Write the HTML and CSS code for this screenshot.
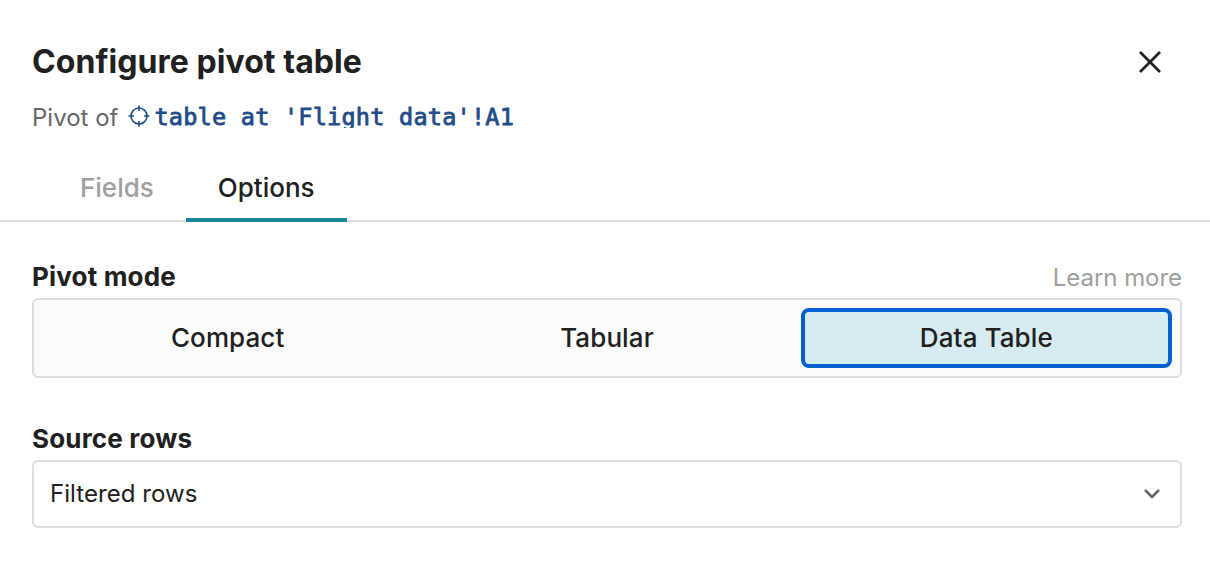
FILE: index.html
```html
<!DOCTYPE html>
<html lang="en">
<head>
  <meta charset="UTF-8" />
  <title>Configure pivot table</title>
  <link rel="stylesheet" href="styles.css">
</head>
<body>
  <header class="header">
    <h1>Configure pivot table</h1>
    <button class="close" title="Close">
      <svg width="24" height="24" viewBox="0 0 24 24"><path d="M2 2L22 22M22 2L2 22"/></svg>
    </button>
  </header>
  <div class="source">
    <span>Pivot of</span>
    <svg width="22" height="22" viewBox="0 0 22 22"><circle cx="11" cy="11" r="8"/><path d="M11 0.5V6M11 16V21.5M0.5 11H6M16 11H21.5"/></svg>
    <span class="ref">table at 'Flight data'!A1</span>
  </div>
  <nav class="tabs">
    <button class="tab">Fields</button>
    <button class="tab active">Options</button>
  </nav>
  <main class="options">
    <div class="label-row">
      <h2>Pivot mode</h2>
      <a class="learn">Learn more</a>
    </div>
    <div class="modes">
      <button class="mode">Compact</button>
      <button class="mode">Tabular</button>
      <button class="mode selected">Data Table</button>
    </div>
    <div class="label-row">
      <h2>Source rows</h2>
    </div>
    <div class="select">
      <span>Filtered rows</span>
      <svg width="18" height="12" viewBox="0 0 18 12"><path d="M2 2L9 9L16 2"/></svg>
    </div>
  </main>
</body>
</html>
```
FILE: styles.css
```css
* {
  box-sizing: border-box;
}
body {
  font-family: Inter, sans-serif;
  margin: 0;
  background: white;
  color: #202020;
}
h1, h2 {
  margin: 0;
}
button {
  font-family: inherit;
  color: inherit;
  background: none;
  border: none;
  padding: 0;
  margin: 0;
  cursor: pointer;
}
svg {
  fill: none;
  display: block;
}
.header {
  display: flex;
  justify-content: space-between;
  align-items: center;
  padding: 42px 48px 0 32px;
}
h1 {
  font-size: 32px;
  line-height: 40px;
  font-weight: 700;
  letter-spacing: 0.06px;
}
.close svg {
  stroke: #202020;
  stroke-width: 2.7;
}
.source {
  display: flex;
  align-items: center;
  height: 34px;
  margin-top: 18px;
  padding-left: 32px;
  font-size: 24px;
  color: #666;
}
.source svg {
  stroke: #1f4b87;
  stroke-width: 1.6;
  margin: -2px 4px 0 10px;
}
.ref {
  font-family: "DejaVu Sans Mono", monospace;
  font-size: 23.5px;
  letter-spacing: 0.24px;
  color: #1f4b87;
  -webkit-text-stroke: 0.8px #1f4b87;
  height: 24px;
  line-height: 27px;
  margin-bottom: 2px;
  overflow: hidden;
}
.tabs {
  display: flex;
  height: 88px;
  padding: 20px 0 0 48px;
  border-bottom: 2px solid #ddd;
}
.tab {
  font-size: 26px;
  font-weight: 500;
  height: 68px;
  padding: 0 32px 2px;
  color: #9e9e9e;
}
.tab.active {
  color: #202020;
  padding-bottom: 0;
  padding-top: 2px;
  border-bottom: 4px solid #20849b;
}
.options {
  padding: 38px 28px 0 32px;
}
.label-row {
  display: flex;
  justify-content: space-between;
  align-items: center;
  height: 38px;
  padding-bottom: 5px;
}
h2 {
  font-size: 26px;
  font-weight: 700;
  letter-spacing: 0.18px;
}
.learn {
  font-size: 24px;
  line-height: 30px;
  padding-top: 2px;
  letter-spacing: -0.05px;
  color: #9e9e9e;
}
.modes {
  display: grid;
  grid-template-columns: repeat(3, 1fr);
  gap: 8px;
  height: 80px;
  padding: 8px;
  margin-bottom: 44px;
  background: #fbfbfb;
  border: 2px solid #ddd;
  border-radius: 6px;
}
.mode {
  font-size: 26px;
  font-weight: 500;
  letter-spacing: 0.1px;
  padding-bottom: 2px;
}
.mode.selected {
  background: #d7ecf1;
  border: 4px solid #0560cf;
  border-radius: 8px;
}
.select {
  display: flex;
  justify-content: space-between;
  align-items: center;
  height: 68px;
  padding: 0 19px 2px 16px;
  font-size: 24px;
  letter-spacing: 0.05px;
  border: 2px solid #ddd;
  border-radius: 6px;
}
.select svg {
  stroke: #666;
  stroke-width: 2.6;
  margin-top: 2px;
}
```
